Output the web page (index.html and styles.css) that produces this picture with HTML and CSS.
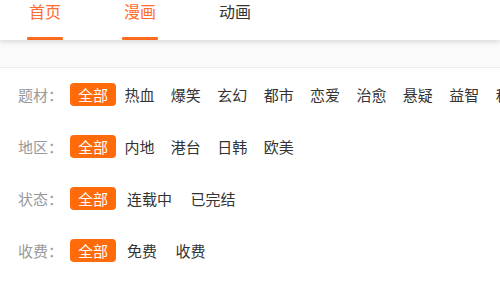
FILE: index.html
```html
<!DOCTYPE html>
<html lang="zh">
<head>
<meta charset="utf-8">
<link rel="stylesheet" href="styles.css">
</head>
<body>
<header class="tabs">
  <div class="tab active"><span class="tab-text">首页</span><span class="bar"></span></div>
  <div class="tab active"><span class="tab-text">漫画</span><span class="bar"></span></div>
  <div class="tab"><span class="tab-text">动画</span><span class="bar"></span></div>
</header>
<div class="band"></div>
<section class="filters">
  <div class="row">
    <span class="label">题材：</span>
    <span class="item on">全部</span><span class="item">热血</span><span class="item">爆笑</span><span class="item">玄幻</span><span class="item">都市</span><span class="item">恋爱</span><span class="item">治愈</span><span class="item">悬疑</span><span class="item">益智</span><span class="item">科幻</span>
  </div>
  <div class="row">
    <span class="label">地区：</span>
    <span class="item on">全部</span><span class="item">内地</span><span class="item">港台</span><span class="item">日韩</span><span class="item">欧美</span>
  </div>
  <div class="row loose">
    <span class="label">状态：</span>
    <span class="item on">全部</span><span class="item">连载中</span><span class="item">已完结</span>
  </div>
  <div class="row loose">
    <span class="label">收费：</span>
    <span class="item on">全部</span><span class="item">免费</span><span class="item">收费</span>
  </div>
</section>
</body>
</html>
```
FILE: styles.css
```css
* { box-sizing: border-box; }
html, body { margin: 0; padding: 0; background: #fff; overflow: hidden; }
body {
  font-family: "Noto Sans CJK SC", "Noto Sans", sans-serif;
  width: 500px;
  height: 298px;
}
.tabs {
  position: relative;
  z-index: 1;
  height: 40px;
  display: flex;
  padding-left: 27px;
  gap: 59px;
  background: #fff;
  box-shadow: 0 2px 5px rgba(0, 0, 0, 0.13);
}
.tab {
  width: 36px;
  display: flex;
  flex-direction: column;
  align-items: center;
  justify-content: space-between;
  color: #333;
}
.tab-text {
  font-size: 16px;
  line-height: 22px;
}
.bar {
  width: 36px;
  height: 3px;
  border-radius: 1px;
}
.tab.active { color: #ff6c2c; }
.tab.active .bar { background: #ff6a1f; }
.band {
  height: 28px;
  background: #fafafa;
  border-bottom: 1px solid #ededed;
}
.filters {
  padding-left: 18px;
}
.row {
  height: 52px;
  display: flex;
  align-items: center;
  white-space: nowrap;
  font-size: 15px;
}
.label {
  width: 52px;
  flex: none;
  color: #999;
}
.item {
  flex: none;
  height: 23px;
  line-height: 23px;
  padding: 0 8px;
  margin-right: 0.4px;
  color: #333;
  border-radius: 4px;
}
.row.loose .item {
  padding: 0 9px;
}
.row.loose .item.on {
  padding: 0 8px;
  margin-right: 2px;
}
.item.on {
  background: #ff6a0a;
  color: #fff;
}
```
